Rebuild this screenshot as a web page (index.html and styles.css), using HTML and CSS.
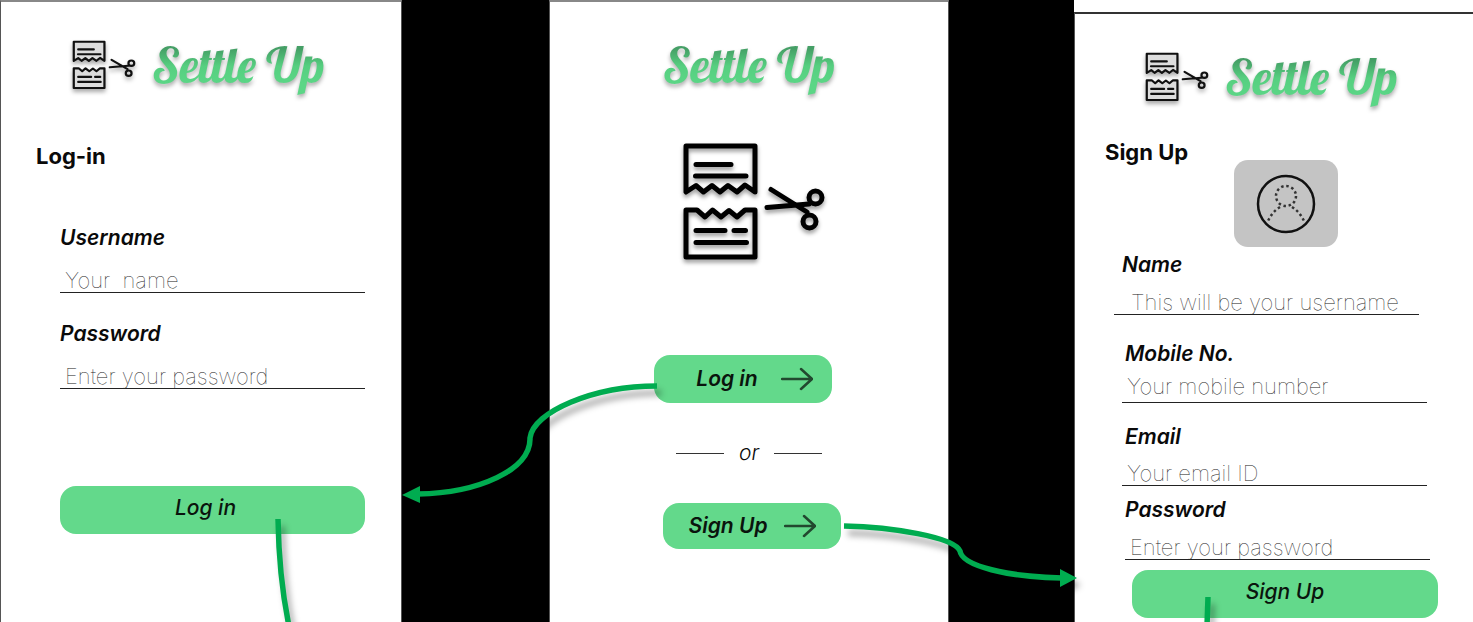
FILE: index.html
```html
<!DOCTYPE html>
<html lang="en">
<head>
<meta charset="utf-8">
<title>Settle Up</title>
<link rel="stylesheet" href="styles.css">
</head>
<body>
<svg class="symbols" aria-hidden="true">
  <symbol id="receipt" viewBox="0 0 144 120" preserveAspectRatio="none">
    <g stroke="currentColor" stroke-width="5" stroke-linejoin="round" stroke-linecap="round">
      <path d="M4 50V4H73V50L63 43L55 50L46 43.500L38 50L30 43.500L21.500 50L14 43.500Z"/>
      <path d="M4 115V68H15L23 75L30.500 68L39 75L47 68.500L55 75L63 68H73V115Z"/>
      <path fill="none" d="M14 22.500H49M13.500 34H64M14 88.500H43M52 88.500H63.500M14 100.500H64.500"/>
      <path fill="none" d="M89 47.500L125 70M85 65.500L127 62"/>
      <circle fill="none" cx="133.500" cy="55.500" r="6.500"/>
      <circle fill="none" cx="127.500" cy="79.500" r="6.500"/>
    </g>
  </symbol>
  <symbol id="arrow" viewBox="0 0 32 24">
    <path d="M1 12H30M20 2L31 12L20 22" fill="none" stroke="currentColor" stroke-width="2.500" stroke-linejoin="round" stroke-linecap="round"/>
  </symbol>
</svg>

<main class="board">
  <section class="screen login">
    <header class="brand">
      <svg class="mark" aria-hidden="true"><use href="#receipt"/></svg>
      <span class="wordmark">Settle Up</span>
    </header>
    <h1 class="title">Log-in</h1>
    <form class="form">
      <div class="field">
        <label for="login-user">Username</label>
        <input id="login-user" type="text" placeholder="Your  name">
      </div>
      <div class="field">
        <label for="login-pass">Password</label>
        <input id="login-pass" type="password" placeholder="Enter your password">
      </div>
      <button class="button submit" type="button">Log in</button>
    </form>
  </section>

  <section class="screen welcome">
    <span class="wordmark">Settle Up</span>
    <svg class="hero" aria-hidden="true"><use href="#receipt"/></svg>
    <button class="button choice login-choice" type="button">Log in<svg class="arrow" aria-hidden="true"><use href="#arrow"/></svg></button>
    <div class="divider">or</div>
    <button class="button choice signup-choice" type="button">Sign Up<svg class="arrow" aria-hidden="true"><use href="#arrow"/></svg></button>
  </section>

  <section class="screen signup">
    <header class="brand">
      <svg class="mark" aria-hidden="true"><use href="#receipt"/></svg>
      <span class="wordmark">Settle Up</span>
    </header>
    <div class="intro">
      <h1 class="title">Sign Up</h1>
      <button class="avatar" type="button" aria-label="Add photo">
        <svg viewBox="0 0 60 60" width="60" height="60" aria-hidden="true">
          <circle cx="30" cy="30" r="28" fill="none" stroke="#111" stroke-width="2.500"/>
          <g fill="none" stroke="#333" stroke-width="2.500" stroke-dasharray="2.500 2.730">
            <circle cx="30" cy="22" r="10"/>
            <path d="M24 33Q16 38 12 47M36 33Q44 38 48 47"/>
          </g>
        </svg>
      </button>
    </div>
    <form class="form">
      <div class="field name">
        <label for="su-name">Name</label>
        <input id="su-name" type="text" placeholder="This will be your username">
      </div>
      <div class="field mobile">
        <label for="su-mobile">Mobile No.</label>
        <input id="su-mobile" type="tel" placeholder="Your mobile number">
      </div>
      <div class="field email">
        <label for="su-email">Email</label>
        <input id="su-email" type="email" placeholder="Your email ID">
      </div>
      <div class="field password">
        <label for="su-pass">Password</label>
        <input id="su-pass" type="password" placeholder="Enter your password">
      </div>
      <button class="button submit" type="button">Sign Up</button>
    </form>
  </section>

  <svg class="connectors" viewBox="0 0 1473 622" preserveAspectRatio="none" aria-hidden="true">
    <g fill="none" stroke="#00ac50" stroke-width="5.500">
      <path d="M657 386C593 386 533 412 530 438C531 470 478 493 418 494"/>
      <path d="M844 526C892 527 954 537 960 551C962 566 1008 577 1062 578"/>
      <path d="M278 519Q279 578 289 626"/>
      <path d="M1208 597L1207 626"/>
    </g>
    <g fill="#00ac50">
      <path d="M402 495L420 486V503Z"/>
      <path d="M1077 578L1060 569V587Z"/>
    </g>
  </svg>
</main>
</body>
</html>
```
FILE: styles.css
```css
* { box-sizing: border-box; }

body {
  margin: 0;
  background: #000;
  color: #0a0a0a;
  font-family: Inter, "Liberation Sans", sans-serif;
  font-size: 22px;
  line-height: 28px;
}

.symbols { position: absolute; width: 0; height: 0; }

.board {
  position: relative;
  display: grid;
  grid-template-columns: 402fr 147fr 400fr 125fr 399fr;
  height: 100vh;
  overflow: hidden;
}

.screen {
  background: #fff;
  border: solid #555;
  border-width: 2px 1px 0;
  border-top-color: #888;
}
.login { grid-column: 1; padding: 38px 36px 0 35px; }
.welcome {
  grid-column: 3;
  display: flex;
  flex-direction: column;
  align-items: center;
  padding-top: 38px;
}
.signup {
  grid-column: 5;
  margin-top: 12px;
  padding: 38px 35px 0 30px;
  border-right: 0;
  border-top-color: #333;
  box-shadow: 0 -12px #fff;
}

.brand { display: flex; align-items: flex-start; height: 56px; gap: 16px; padding-left: 36px; }
.signup .brand { padding-left: 40px; }
.mark { width: 64px; height: 50px; fill: #ddd; color: #111; filter: drop-shadow(0 3px 2px #0005); }
.hero { width: 144px; height: 120px; margin: 44px 0 0 10px; fill: none; color: #000; filter: drop-shadow(0 3px 2px #0006); }
.wordmark {
  padding-bottom: 8px;
  font-family: Lobster, "Liberation Serif", serif;
  font-size: 49px;
  font-weight: 400;
  line-height: 50px;
  white-space: nowrap;
  color: transparent;
  background: linear-gradient(#459f66 15%, #56cf80 45%, #5bd686 75%);
  background-clip: text;
  -webkit-background-clip: text;
  filter: drop-shadow(0 3px 2px #0005);
}

.title { margin: 0; font-size: 22px; font-weight: 700; }
.login .title { margin-top: 46px; }

.field { display: flex; flex-direction: column; }
label { font-size: 21px; font-style: italic; font-weight: 600; }
input {
  width: 100%;
  height: 25px;
  padding: 0 5px;
  border: 0;
  border-bottom: 1px solid #222;
  border-radius: 0;
  background: none;
  font: 100 22px/24px Inter, "Liberation Sans", sans-serif;
  outline: 0;
}
input::placeholder { color: #222; opacity: 1; }

.button {
  display: flex;
  align-items: center;
  justify-content: center;
  height: 48px;
  padding: 0;
  border: 0;
  border-radius: 16px;
  background: #63d98b;
  color: #0a140d;
  font: italic 500 21px/28px Inter, "Liberation Sans", sans-serif;
}
.submit { width: 100%; padding: 0 14px 4px 0; }

.login .form { padding-left: 24px; margin-top: 54px; }
.login .field { margin-bottom: 27px; }
.login input { margin-top: 16px; }
.login .submit { margin-top: 97px; }

.choice { width: 178px; font-weight: 600; }
.choice .arrow { width: 32px; height: 24px; color: #22482f; }
.login-choice { gap: 23px; margin: 93px 12px 0 0; padding-left: 23px; }
.signup-choice { height: 46px; gap: 16px; margin: 36px 0 0 6px; }
.divider {
  display: flex;
  align-items: center;
  gap: 15px;
  margin-top: 36px;
  font-size: 21px;
  font-style: italic;
  font-weight: 300;
}
.divider::before, .divider::after { content: ""; width: 48px; height: 1px; background: #333; }

.intro { display: flex; align-items: flex-start; gap: 46px; margin-top: 30px; }
.avatar {
  display: grid;
  place-items: center;
  width: 104px;
  height: 87px;
  margin-top: 22px;
  padding: 0;
  border: 0;
  border-radius: 14px;
  background: #c4c4c4;
}
.signup .form { padding-left: 9px; margin-top: 4px; }
.name { padding-right: 19px; }
.name label { padding-left: 8px; }
.name input { margin-top: 11px; padding-left: 17px; }
.mobile, .email { margin-left: 8px; padding-right: 11px; }
.mobile label, .email label { padding-left: 3px; }
.mobile { margin-top: 25px; }
.mobile input { height: 29px; margin-top: 6px; padding-bottom: 4px; }
.email { margin-top: 20px; }
.email input { margin-top: 10px; }
.password { margin: 10px 8px 0 11px; }
.password input { margin-top: 11px; }
.signup .submit { width: auto; min-width: calc(100% - 18px); margin: 10px 0 0 18px; padding-right: 0; }

.connectors {
  position: absolute;
  inset: 0;
  width: 100%;
  height: 100%;
  pointer-events: none;
  filter: drop-shadow(4px 7px 3px #0005);
}
```
